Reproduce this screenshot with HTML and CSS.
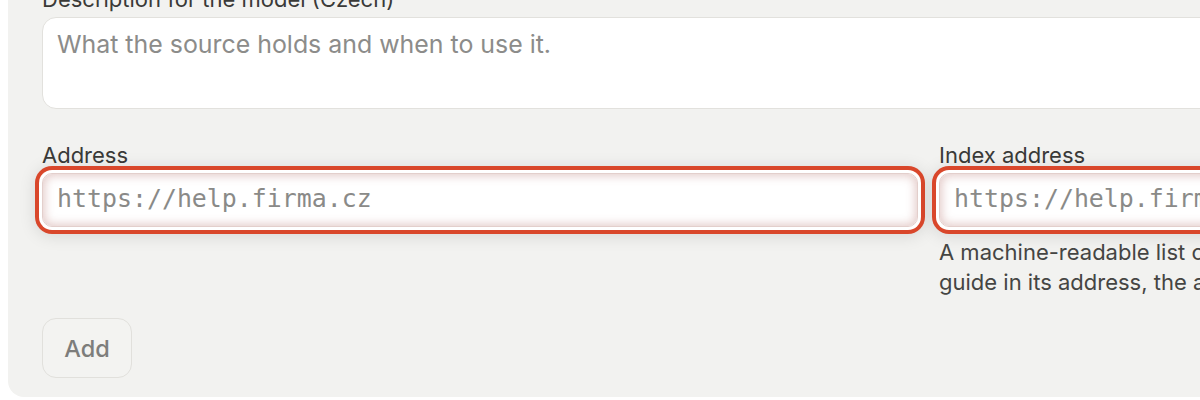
FILE: index.html
```html
<!DOCTYPE html>
<html lang="en">
<head>
<meta charset="utf-8">
<title>Add source</title>
<link rel="stylesheet" href="styles.css">
</head>
<body>
<div class="page">
  <form class="panel">
    <div class="field">
      <label class="label" for="desc">Description for the model (Czech)</label>
      <textarea id="desc" class="textarea" placeholder="What the source holds and when to use it."></textarea>
    </div>
    <div class="row">
      <div class="field">
        <label class="label" for="addr">Address</label>
        <input id="addr" class="input invalid" type="text" placeholder="https://help.firma.cz">
      </div>
      <div class="field">
        <label class="label" for="idx">Index address</label>
        <input id="idx" class="input invalid" type="text" placeholder="https://help.firma.cz/llms.txt">
        <p class="help">A machine-readable list of the site's pages, such as llms.txt or sitemap.xml. If it has no<br>guide in its address, the app looks for one on its own.</p>
      </div>
    </div>
    <div class="actions">
      <button type="button" class="btn">Add</button>
    </div>
  </form>
</div>
</body>
</html>
```

FILE: styles.css
```css
html, body {
  margin: 0;
  padding: 0;
  background: #ffffff;
  overflow: hidden;
  height: 400px;
}

.page {
  padding-left: 8px;
  font-family: Inter, "Noto Sans", sans-serif;
}

.panel {
  width: 1773px;
  margin-top: -16px;
  padding: 0 34px 19px;
  background: #f2f2f0;
  border-bottom-left-radius: 16px;
  display: flex;
  flex-direction: column;
}

.field {
  display: flex;
  flex-direction: column;
  min-width: 0;
}

.label {
  font-size: 22px;
  line-height: 30px;
  color: #3a3a38;
  margin-bottom: 3px;
}

.textarea {
  box-sizing: border-box;
  height: 92px;
  resize: none;
  border: 1px solid #e2e1dd;
  border-radius: 14px;
  background: #ffffff;
  padding: 10px 14px;
  font-family: Inter, "Noto Sans", sans-serif;
  font-size: 24.9px;
  line-height: 32px;
  color: #333;
  outline: none;
}

.textarea::placeholder {
  color: #8c8c8a;
}

.row {
  margin-top: 31px;
  display: grid;
  grid-template-columns: 1fr 1fr;
  column-gap: 21px;
}

.input {
  box-sizing: border-box;
  height: 54px;
  border: 1px solid #e3cfcc;
  border-radius: 10px;
  background: #ffffff;
  padding: 0 14px 4px;
  font-family: "DejaVu Sans Mono", "Liberation Mono", monospace;
  font-size: 24.9px;
  color: #333;
  outline: none;
}

.input::placeholder {
  color: #8a8a88;
}

.input.invalid {
  box-shadow:
    inset 0 0 10px 2px rgba(196, 140, 136, 0.45),
    0 0 0 3px #ffffff,
    0 0 0 7px #d9472b,
    0 2px 16px 8px rgba(0, 0, 0, 0.10);
}

.help {
  margin: 10px 0 0;
  font-size: 22px;
  line-height: 30px;
  color: #454543;
  white-space: nowrap;
}

.actions {
  margin-top: 21px;
  display: flex;
}

.btn {
  box-sizing: border-box;
  width: 90px;
  height: 60px;
  border: 1px solid #e1e0dc;
  border-radius: 14px;
  background: #f3f3f1;
  font-family: Inter, "Noto Sans", sans-serif;
  font-size: 23.5px;
  font-weight: 500;
  color: #7d7d7b;
  cursor: pointer;
}
```
